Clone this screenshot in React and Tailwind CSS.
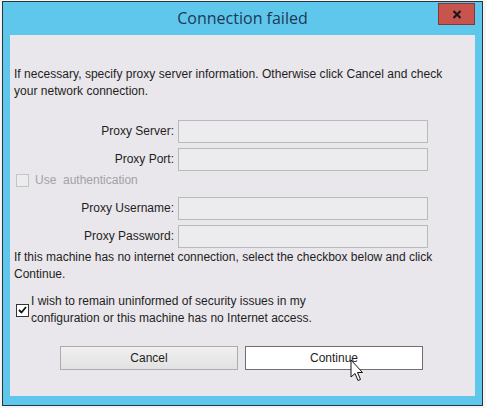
import React from "react";

function Input() {
  return <div className="h-[23px] w-[250px] border border-[#b9b8bb] bg-[#ecebee]" />;
}

function Row({ label }) {
  return (
    <div className="flex items-center">
      <div className="w-[160px] text-right">{label}</div>
      <div className="ml-[4px]">
        <Input />
      </div>
    </div>
  );
}

export default function App() {
  return (
    <div
      className="w-[486px] h-[408px] bg-[#f5f5f5] pt-[1px] pl-[2px] pr-[3px] pb-[2px] overflow-hidden"
      style={{ fontFamily: '"Liberation Sans", Arial, sans-serif' }}
    >
      <div className="relative flex h-full flex-col border border-[#27353f] bg-[#5fc6ec]">
        <div className="relative h-[33px] shrink-0">
          <div className="pt-[5px] text-center text-[16px] leading-[22px] text-[#1b3a56]" style={{ fontFamily: '"Open Sans", "Noto Sans", sans-serif' }}>
            Connection failed
          </div>
          <div className="absolute right-[7px] top-[1px] flex h-[22px] w-[37px] items-center justify-center border border-[#7d3a36] bg-[#c9544e]">
            <svg width="10" height="9" viewBox="0 0 10 9">
              <path d="M1.5 1 L8.5 8 M8.5 1 L1.5 8" stroke="#1a1a1a" strokeWidth="2.2" />
            </svg>
          </div>
        </div>
        <div className="mx-[7px] mb-[9px] flex flex-1 flex-col bg-[#e9e7eb] pl-[4px] text-[12px] leading-[17px] text-[#1e1e1e]">
          <p className="mt-[31px] tracking-[0.03px]">
            If necessary, specify proxy server information. Otherwise click Cancel and check
            <br />
            your network connection.
          </p>
          <div className="mt-[20px] flex flex-col gap-[5px]">
            <Row label="Proxy Server:" />
            <Row label="Proxy Port:" />
          </div>
          <div className="mt-[2px] flex h-[15px] items-center">
            <div className="ml-[2px] h-[13px] w-[13px] border border-[#c4c3c6] bg-[#ecebee]" />
            <span className="ml-[6px] text-[#a3a2a6]">Use&nbsp; authentication</span>
          </div>
          <div className="mt-[9px] flex flex-col gap-[5px]">
            <Row label="Proxy Username:" />
            <Row label="Proxy Password:" />
          </div>
          <p className="mt-[1px]">
            If this machine has no internet connection, select the checkbox below and click
            <br />
            Continue.
          </p>
          <div className="mt-[10px] flex items-center">
            <div className="ml-[2px] flex h-[13px] w-[13px] items-center justify-center border border-[#333] bg-white">
              <svg width="9" height="8" viewBox="0 0 9 8">
                <path d="M1 4 L3.5 6.5 L8 1" stroke="#111" strokeWidth="1.8" fill="none" />
              </svg>
            </div>
            <p className="ml-[2px]">
              I wish to remain uninformed of security issues in my
              <br />
              configuration or this machine has no Internet access.
            </p>
          </div>
          <div className="mt-[19px] flex justify-center gap-[7px] pr-[6px]">
            <div className="flex h-[24px] w-[178px] items-center justify-center border border-[#acacac] bg-gradient-to-b from-[#f0f0f0] to-[#e2e2e2]">
              Cancel
            </div>
            <div className="relative flex h-[24px] w-[178px] items-center justify-center border border-[#707070] bg-white">
              Continue
              <svg className="absolute left-[104px] top-[12px]" width="14" height="23" viewBox="0 0 14 23">
                <path d="M1 1 L1 18 L5 14.5 L8 21.5 L10.5 20.5 L7.5 13.5 L12.5 13.5 Z" fill="white" stroke="#111" strokeWidth="1" strokeLinejoin="miter" />
              </svg>
            </div>
          </div>
        </div>
      </div>
    </div>
  );
}
